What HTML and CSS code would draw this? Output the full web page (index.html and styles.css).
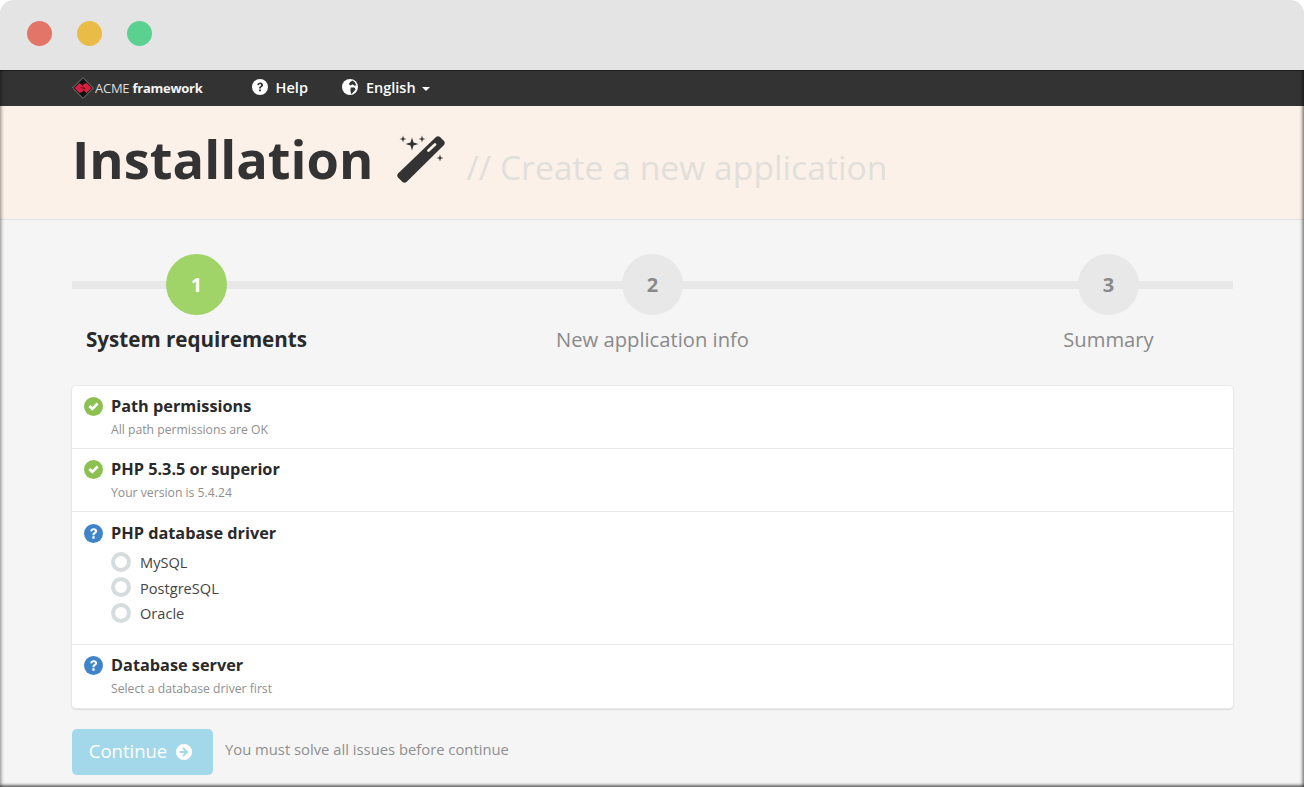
FILE: index.html
```html
<!DOCTYPE html>
<html lang="en">
<head>
  <meta charset="UTF-8">
  <title>Installation</title>
  <link rel="stylesheet" href="styles.css">
</head>
<body>
  <div class="window">
    <div class="titlebar">
      <span class="dot dot-red"></span>
      <span class="dot dot-yellow"></span>
      <span class="dot dot-green"></span>
    </div>

    <nav class="navbar">
      <a class="brand">
        <svg class="brand-logo" viewBox="0 0 22 22" width="22" height="22">
          <path d="M11 0L22 11L11 22L0 11Z" fill="#111"/>
          <path d="M11 .6L21.400 11L11 21.400L.6 11Z" fill="none" stroke="#aaa" stroke-width=".8"/>
          <path d="M2.500 11L7.500 6L10.500 9L8.500 11L13 11.800L10 15L7.500 16Z" fill="#d81f3f"/>
          <path d="M19.500 11L14.500 16L11.500 13L13.500 11L9 10.200L12 7L14.500 6Z" fill="#d81f3f"/>
        </svg>
        <span class="brand-name">ACME <b>framework</b></span>
      </a>
      <a class="nav-link">
        <svg class="nav-icon" viewBox="0 0 20 20"><circle cx="10" cy="10" r="10" fill="#fff"/><path d="M6.600 7.600C6.700 5.600 8.200 4.400 10.200 4.400C12.300 4.400 13.800 5.600 13.800 7.400C13.800 9 12.800 9.600 11.900 10.200C11.200 10.700 11.100 11 11.100 11.900H8.900C8.900 10.400 9.200 9.700 10.200 9C11 8.500 11.400 8.200 11.400 7.500C11.400 6.800 10.900 6.400 10.100 6.400C9.300 6.400 8.800 6.900 8.700 7.900ZM8.800 13H11.200V15.400H8.800Z" fill="#333"/></svg>
        Help
      </a>
      <a class="nav-link">
        <svg class="nav-icon" viewBox="0 0 20 20"><circle cx="10" cy="10" r="10" fill="#fff"/><path d="M11 10.500L15.500 10.500L17 13L14 16.500L11.500 19L10.500 14.500ZM13 2L16 4L18 8L15 8L13 6.500L11 8L8.500 6.500L10 4Z" fill="#333"/></svg>
        English
        <span class="caret"></span>
      </a>
    </nav>

    <header class="page-header">
      <h1>Installation</h1>
      <svg class="wand" viewBox="0 0 48 50" width="48" height="50">
        <path d="M39 3Q41 1.500 43 3L47 7Q48.500 9 47 11L9.500 48Q7.500 49.500 5.500 48L1 43.500Q-.5 41.500 1 39.500Z" fill="#333"/>
        <path d="M31.500 16.500L38 10.500" stroke="#fcf1e8" stroke-width="2.800" stroke-linecap="round"/>
        <path d="M15 3.500L16.500 8.500L21.500 10L16.500 11.500L15 16.500L13.500 11.500L8.500 10L13.500 8.500Z" fill="#333"/>
        <path d="M6 1.500L6.800 4.200L9.500 5L6.800 5.800L6 8.500L5.200 5.800L2.500 5L5.200 4.200Z" fill="#333"/>
        <path d="M25 1.500L25.800 4.200L28.500 5L25.800 5.800L25 8.500L24.200 5.800L21.500 5L24.200 4.200Z" fill="#333"/>
        <path d="M43 20.500L43.800 23.200L46.500 24L43.800 24.800L43 27.500L42.200 24.800L39.500 24L42.200 23.200Z" fill="#333"/>
      </svg>
      <span class="subtitle">// Create a new application</span>
    </header>

    <main class="content">
      <ol class="steps">
        <li class="step step-active"><span class="step-num">1</span><span class="step-label">System requirements</span></li>
        <li class="step"><span class="step-num">2</span><span class="step-label">New application info</span></li>
        <li class="step"><span class="step-num">3</span><span class="step-label">Summary</span></li>
      </ol>

      <section class="checklist">
        <div class="check-row">
          <svg class="status" viewBox="0 0 20 20"><circle cx="10" cy="10" r="10" fill="#8cc152"/><path d="M4.600 10.400L6.700 8.300L8.800 10.400L13.300 5.900L15.400 8L8.800 14.600Z" fill="#fff"/></svg>
          <div>
            <h3>Path permissions</h3>
            <p>All path permissions are OK</p>
          </div>
        </div>
        <div class="check-row">
          <svg class="status" viewBox="0 0 20 20"><circle cx="10" cy="10" r="10" fill="#8cc152"/><path d="M4.600 10.400L6.700 8.300L8.800 10.400L13.300 5.900L15.400 8L8.800 14.600Z" fill="#fff"/></svg>
          <div>
            <h3>PHP 5.3.5 or superior</h3>
            <p>Your version is 5.4.24</p>
          </div>
        </div>
        <div class="check-row check-row-radios">
          <svg class="status" viewBox="0 0 20 20"><circle cx="10" cy="10" r="10" fill="#3f83c8"/><path d="M6.600 7.600C6.700 5.600 8.200 4.400 10.200 4.400C12.300 4.400 13.800 5.600 13.800 7.400C13.800 9 12.800 9.600 11.900 10.200C11.200 10.700 11.100 11 11.100 11.900H8.900C8.900 10.400 9.200 9.700 10.200 9C11 8.500 11.400 8.200 11.400 7.500C11.400 6.800 10.900 6.400 10.100 6.400C9.300 6.400 8.800 6.900 8.700 7.900ZM8.800 13H11.200V15.400H8.800Z" fill="#fff"/></svg>
          <div>
            <h3>PHP database driver</h3>
            <div class="radios">
              <label class="radio"><span class="radio-mark"></span><span class="radio-text">MySQL</span></label>
              <label class="radio"><span class="radio-mark"></span><span class="radio-text">PostgreSQL</span></label>
              <label class="radio"><span class="radio-mark"></span><span class="radio-text">Oracle</span></label>
            </div>
          </div>
        </div>
        <div class="check-row">
          <svg class="status" viewBox="0 0 20 20"><circle cx="10" cy="10" r="10" fill="#3f83c8"/><path d="M6.600 7.600C6.700 5.600 8.200 4.400 10.200 4.400C12.300 4.400 13.800 5.600 13.800 7.400C13.800 9 12.800 9.600 11.900 10.200C11.200 10.700 11.100 11 11.100 11.900H8.900C8.900 10.400 9.200 9.700 10.200 9C11 8.500 11.400 8.200 11.400 7.500C11.400 6.800 10.900 6.400 10.100 6.400C9.300 6.400 8.800 6.900 8.700 7.900ZM8.800 13H11.200V15.400H8.800Z" fill="#fff"/></svg>
          <div>
            <h3>Database server</h3>
            <p>Select a database driver first</p>
          </div>
        </div>
      </section>

      <div class="actions">
        <button class="continue-button" disabled>
          Continue
          <svg class="continue-icon" viewBox="0 0 20 20"><circle cx="10" cy="10" r="10" fill="#fff"/><path d="M9.500 4L15.500 10L9.500 16L7.800 14.300L10.900 11.300H4.500V8.700H10.900L7.800 5.700Z" fill="#a3d7ea"/></svg>
        </button>
        <span class="actions-note">You must solve all issues before continue</span>
      </div>
    </main>
  </div>
</body>
</html>
```

FILE: styles.css
```css
* { margin: 0; padding: 0; box-sizing: border-box; }

html, body { height: 100%; }

body {
  font-family: "Open Sans", "Liberation Sans", sans-serif;
  background-color: white;
  overflow: hidden;
}

.window {
  position: relative;
  height: 787px;
  background-color: #f5f5f5;
  border-radius: 14px 14px 0 0;
  overflow: hidden;
}

/* dark soft edge of the window, lies over everything below the title bar */
.window::after {
  content: "";
  position: absolute;
  top: 70px;
  left: 0;
  right: 0;
  bottom: 0;
  box-shadow: inset -3px 0 3px -1px rgba(0, 0, 0, 0.4),
              inset 3px 0 3px -1px rgba(0, 0, 0, 0.25),
              inset 0 -3px 3px -1px rgba(0, 0, 0, 0.55);
  pointer-events: none;
}

.titlebar {
  height: 70px;
  display: flex;
  align-items: center;
  gap: 25px;
  padding: 0 0 3px 27px;
  background-color: #e4e4e4;
}

.dot { width: 25px; height: 25px; border-radius: 50%; }
.dot-red    { background-color: #e37468; }
.dot-yellow { background-color: #e9bc47; }
.dot-green  { background-color: #5bd18f; }

.navbar {
  height: 36px;
  display: flex;
  align-items: center;
  padding: 0 0 2px 72px;
  color: white;
  background-color: #333;
  border-top: 1px solid #222;
  font-size: 14.5px;
  font-weight: 600;
}

.brand {
  display: flex;
  align-items: center;
  gap: 1px;
  margin-right: 49px;
}

.brand-logo { flex: none; }
.brand-name { font-size: 13px; font-weight: 400; letter-spacing: -0.25px; color: #ddd; }
.brand-name b { font-weight: 700; color: #f4f4f4; }

.nav-link {
  display: flex;
  align-items: center;
  margin-right: 34px;
}

.nav-icon { width: 16px; height: 16px; margin-right: 8px; margin-top: -2px; }

.caret {
  margin-left: 6px;
  margin-top: 2px;
  border-top: 4px solid white;
  border-left: 4px solid transparent;
  border-right: 4px solid transparent;
}

.page-header {
  height: 114px;
  display: flex;
  align-items: center;
  padding: 0 0 3px 72px;
  background-color: #fcf1e8;
  border-bottom: 1px solid #e3e0dd;
}

.page-header h1 {
  margin-top: -4px;
  font-size: 52.4px;
  font-weight: 700;
  color: #333;
  line-height: 1;
}

.wand { margin: -4px 0 0 24px; }

.subtitle {
  margin: 12px 0 0 21px;
  font-size: 33.7px;
  color: #e2dfdb;
}

.content { padding: 34px 71px 0 72px; }

.steps {
  position: relative;
  display: grid;
  grid-template-columns: repeat(3, 249px);
  justify-content: space-between;
  list-style: none;
}

.steps::before {
  content: "";
  position: absolute;
  top: 27px;
  left: 0;
  right: 0;
  height: 8px;
  background-color: #e8e8e8;
}

.step {
  position: relative;
  display: flex;
  flex-direction: column;
  align-items: center;
  color: #8a8a8a;
  font-size: 20.2px;
  font-weight: 400;
}

.step-num {
  width: 61px;
  height: 61px;
  display: flex;
  align-items: center;
  justify-content: center;
  border-radius: 50%;
  background-color: #e8e8e8;
  font-size: 20px;
  font-weight: 700;
}

.step-label { margin-top: 9px; line-height: 30px; }

.step-active { color: #2a2a2a; font-weight: 700; font-size: 20.6px; }
.step-active .step-num { background-color: #a0d468; color: white; font-size: 20px; }

.checklist {
  margin-top: 32px;
  background-color: white;
  border-radius: 4px;
  box-shadow: 0 0 0 1px #e9e9e9, 0 1px 1px 1px #ddd;
}

.check-row {
  display: flex;
  gap: 8px;
  height: 63px;
  padding: 10px 12px 0;
  border-bottom: 1px solid #e8e8e8;
}

.check-row:last-child { border-bottom: none; }
.check-row-radios { height: 133px; padding-top: 11px; }

.status { flex: none; width: 19px; height: 19px; margin-top: 1px; }

.check-row h3 {
  font-size: 16.3px;
  font-weight: 700;
  line-height: 20px;
  color: #2a2a2a;
}

.check-row p {
  margin-top: 5px;
  font-size: 12.2px;
  line-height: 18px;
  color: #8f8f8f;
}

.radios {
  display: flex;
  flex-direction: column;
  gap: 4.7px;
  margin-top: 8px;
}

.radio {
  display: flex;
  align-items: center;
  gap: 9px;
  height: 21px;
  font-size: 14.6px;
  line-height: 19px;
  color: #444;
}

.radio-text { padding-top: 2px; }

.radio-mark {
  width: 20px;
  height: 20px;
  border: 4px solid #d6dbdd;
  border-radius: 50%;
}

.actions {
  display: flex;
  align-items: center;
  gap: 12px;
  margin-top: 21px;
}

.continue-button {
  width: 141px;
  height: 46px;
  display: flex;
  align-items: center;
  justify-content: center;
  gap: 9px;
  padding: 0 4px 3px 0;
  border: none;
  border-radius: 5px;
  background-color: #a3d7ea;
  color: white;
  font-family: inherit;
  font-size: 18.5px;
  font-weight: 400;
}

.continue-icon { width: 16px; height: 16px; margin-top: 3px; }

.actions-note {
  margin-top: -6px;
  font-size: 14.8px;
  color: #8f8f8f;
}
```
